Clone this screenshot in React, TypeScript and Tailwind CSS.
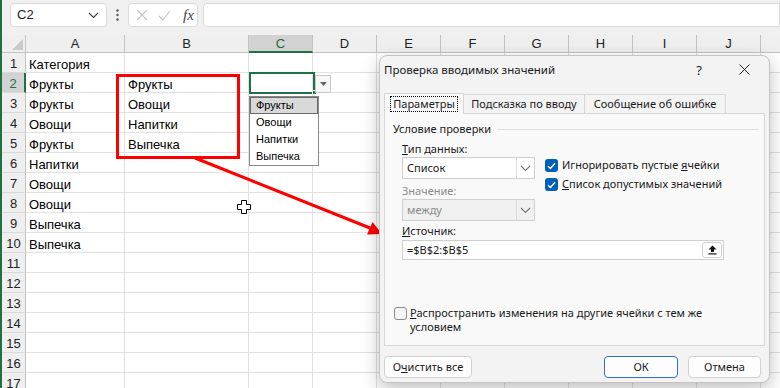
import React from "react";

const cols = [
  { l: "A", w: "w-[99px]" },
  { l: "B", w: "w-[124px]" },
  { l: "C", w: "w-[64px]" },
  { l: "D", w: "w-[64px]" },
  { l: "E", w: "w-[64px]" },
  { l: "F", w: "w-[64px]" },
  { l: "G", w: "w-[64px]" },
  { l: "H", w: "w-[64px]" },
  { l: "I", w: "w-[64px]" },
  { l: "J", w: "w-[64px]" },
  { l: "K", w: "w-[64px]" },
];

const colA = ["Категория", "Фрукты", "Фрукты", "Овощи", "Фрукты", "Напитки", "Овощи", "Овощи", "Выпечка", "Выпечка"];
const colB = ["", "Фрукты", "Овощи", "Напитки", "Выпечка"];
const rows = Array.from({ length: 17 }, (_, i) => i + 1);

function Chevron({ className = "" }: { className?: string }) {
  return (
    <svg width="11" height="7" viewBox="0 0 11 7" className={className}>
      <path d="M1 1l4.5 4.5L10 1" fill="none" stroke="currentColor" strokeWidth="1.1" />
    </svg>
  );
}

function Check() {
  return (
    <span className="flex h-[13px] w-[13px] items-center justify-center rounded-[3px] bg-[#005fb8]">
      <svg width="9" height="8" viewBox="0 0 9 8">
        <path d="M1 4.2l2.4 2.3L8 1.3" fill="none" stroke="white" strokeWidth="1.3" />
      </svg>
    </span>
  );
}

function FormulaBar() {
  return (
    <div className="flex h-[35px] items-start pl-[8px] pt-[3px]">
      <div className="flex h-[24px] w-[100px] items-center justify-between rounded-[4px] border border-[#dadada] bg-white pl-[6px] pr-[7px] text-[13px] text-[#222]">
        <span>C2</span>
        <Chevron className="text-[#444]" />
      </div>
      <div className="flex h-[24px] w-[22px] items-center justify-center text-[#555]">
        <svg width="3" height="12" viewBox="0 0 3 12">
          <circle cx="1.5" cy="1.5" r="1.2" fill="currentColor" />
          <circle cx="1.5" cy="6" r="1.2" fill="currentColor" />
          <circle cx="1.5" cy="10.5" r="1.2" fill="currentColor" />
        </svg>
      </div>
      <div className="flex h-[24px] w-[72px] items-center rounded-[4px] border border-[#dadada] bg-white pl-[7px]">
        <svg width="12" height="12" viewBox="0 0 12 12" className="text-[#c4c4c4]">
          <path d="M1 1l10 10M11 1L1 11" stroke="currentColor" strokeWidth="1.1" />
        </svg>
        <svg width="13" height="11" viewBox="0 0 13 11" className="ml-[10px] text-[#c4c4c4]">
          <path d="M1 6l3.8 4L12 1" fill="none" stroke="currentColor" strokeWidth="1.1" />
        </svg>
        <span className="ml-[12px] font-['Liberation_Serif',serif] text-[15px] italic text-[#444]">fx</span>
      </div>
      <div className="ml-[5px] h-[24px] w-[600px] rounded-l-[4px] border border-[#dadada] bg-white" />
    </div>
  );
}

function Sheet() {
  return (
    <div className="bg-white">
      <div className="flex h-[18px] bg-[#efefef]">
        <div className="relative w-[24px] shrink-0 border-b border-r border-[#c3c3c3]">
          <svg width="11" height="11" viewBox="0 0 11 11" className="absolute left-[10px] top-[4px]">
            <path d="M11 0L11 11L0 11Z" fill="#c9c9c9" />
          </svg>
        </div>
        {cols.map((c) =>
          c.l === "C" ? (
            <div key={c.l} className={`${c.w} flex shrink-0 items-center justify-center border-b-2 border-r border-b-[#1e7145] border-r-[#c3c3c3] bg-[#d2d2d2] pt-[2px] text-[13px] text-[#1e6c41]`}>
              {c.l}
            </div>
          ) : (
            <div key={c.l} className={`${c.w} flex shrink-0 items-center justify-center border-b border-r border-[#c3c3c3] text-[13px] text-[#222]`}>
              {c.l}
            </div>
          )
        )}
      </div>
      {rows.map((r) => (
        <div key={r} className="flex h-[20px]">
          {r === 2 ? (
            <div className="flex w-[24px] shrink-0 items-center justify-center border-b border-r-2 border-b-[#d9d9d9] border-r-[#1e7145] bg-[#d2d2d2] pt-[3px] text-[13px] text-[#1e6c41]">
              {r}
            </div>
          ) : (
            <div className="flex w-[24px] shrink-0 items-center justify-center border-b border-r border-b-[#d9d9d9] border-r-[#c3c3c3] bg-[#efefef] pt-[3px] text-[13px] text-[#222]">
              {r}
            </div>
          )}
          {cols.map((c, ci) => (
            <div key={c.l} className={`${c.w} shrink-0 overflow-hidden whitespace-nowrap border-b border-r border-[#e1e1e1] pl-[3px] pt-[3px] text-[13px] leading-[17px] text-black`}>
              {ci === 0 ? colA[r - 1] ?? "" : ci === 1 ? colB[r - 1] ?? "" : ""}
            </div>
          ))}
        </div>
      ))}
    </div>
  );
}

function Dialog() {
  return (
    <div className="absolute left-[377px] top-[55px] h-[328px] w-[391px] rounded-[8px] border border-[#c4c4c4] bg-[#f3f3f3] font-['Noto_Sans',sans-serif] text-[11px] text-[#1a1a1a] shadow-[0_6px_18px_rgba(0,0,0,0.25)]">
      <div className="flex h-[37px] items-start pl-[4px] pr-[19px] pt-[6px]">
        <span className="text-[11.5px] leading-[16px]">Проверка вводимых значений</span>
        <span className="ml-auto text-[13px] leading-[16px]">?</span>
        <svg width="11" height="11" viewBox="0 0 11 11" className="ml-[37px] mt-[2px]">
          <path d="M0.5 0.5l10 10M10.5 0.5l-10 10" stroke="#222" strokeWidth="1" />
        </svg>
      </div>
      <div className="flex h-[20px] items-end px-[4px]">
        <div className="relative z-10 -mb-px flex h-[21px] w-[80px] items-center justify-center border border-b-0 border-[#d6d6d6] bg-[#f9f9f9]">
          <span className="px-[2px] leading-[14px] outline-1 outline-dotted outline-black">Параметры</span>
        </div>
        <div className="flex h-[19px] w-[121px] items-center justify-center border border-b-0 border-l-0 border-[#d6d6d6] bg-[#f3f3f3]">
          Подсказка по вводу
        </div>
        <div className="flex h-[19px] w-[141px] items-center justify-center border border-b-0 border-l-0 border-[#d6d6d6] bg-[#f3f3f3]">
          Сообщение об ошибке
        </div>
      </div>
      <div className="mx-[4px] h-[233px] border border-[#d6d6d6] bg-[#f9f9f9] pl-[8px] pr-[5px] pt-[7px]">
        <div className="flex h-[16px] items-center">
          <span>Условие проверки</span>
          <div className="ml-[6px] h-px flex-1 bg-[#dcdcdc]" />
        </div>
        <div className="pl-[9px]">
          <div className="mt-[4px] flex h-[16px] items-center">
            <span><span className="underline">Т</span>ип данных:</span>
          </div>
          <div className="flex">
            <div className="w-[133px]">
              <div className="flex h-[22px] items-center border border-[#cfcfcf] bg-white">
                <span className="flex-1 pl-[4px]">Список</span>
                <div className="flex h-full w-[18px] items-center justify-center border-l border-[#dcdcdc]">
                  <Chevron className="text-[#777]" />
                </div>
              </div>
              <div className="mt-[4px] flex h-[16px] items-center text-[#8a8a8a]">Значение:</div>
              <div className="flex h-[22px] items-center border border-[#cfcfcf] bg-[#f0f0f0] text-[#8a8a8a]">
                <span className="flex-1 pl-[4px]">между</span>
                <div className="flex h-full w-[18px] items-center justify-center border-l border-[#dcdcdc]">
                  <Chevron className="text-[#777]" />
                </div>
              </div>
            </div>
            <div className="ml-[10px] pt-[2px]">
              <div className="flex h-[13px] items-center">
                <Check />
                <span className="ml-[4px]">Игнорировать пустые <span className="underline">я</span>чейки</span>
              </div>
              <div className="mt-[6px] flex h-[13px] items-center">
                <Check />
                <span className="ml-[4px]"><span className="underline">С</span>писок допустимых значений</span>
              </div>
            </div>
          </div>
          <div className="mt-[2px] flex h-[16px] items-center">
            <span><span className="underline">И</span>сточник:</span>
          </div>
          <div className="mt-[1px] flex h-[20px] w-[322px] items-center border border-[#cfcfcf] bg-white pl-[4px]">
            <span className="flex-1">=$B$2:$B$5</span>
            <div className="mr-px flex h-[16px] w-[20px] items-center justify-center rounded-[3px] border border-[#cfcfcf] bg-white">
              <svg width="9" height="10" viewBox="0 0 9 10">
                <path d="M4.5 0.5L8.5 4.5H6V7H3V4.5H0.5Z" fill="#111" />
                <rect x="0.5" y="8.3" width="8" height="1.2" fill="#111" />
              </svg>
            </div>
          </div>
        </div>
        <div className="ml-px mt-[46px] flex items-start">
          <span className="mt-px block h-[13px] w-[13px] shrink-0 rounded-[3px] border border-[#8b8b8b] bg-[#f5f5f5]" />
          <span className="ml-[3px] leading-[14px]">
            <span className="underline">Р</span>аспространить изменения на другие ячейки с тем же
            <br />
            условием
          </span>
        </div>
      </div>
      <div className="mt-[10px] flex pl-[4px] pr-[8px]">
        <button className="flex h-[22px] w-[88px] items-center justify-center rounded-[4px] border border-[#d1d1d1] bg-[#fdfdfd]">
          <span>О<span className="underline">ч</span>истить все</span>
        </button>
        <button className="ml-auto flex h-[22px] w-[74px] items-center justify-center rounded-[4px] border border-[#2f72c4] bg-[#fdfdfd]">
          ОК
        </button>
        <button className="ml-[10px] flex h-[22px] w-[73px] items-center justify-center rounded-[4px] border border-[#d1d1d1] bg-[#fdfdfd]">
          Отмена
        </button>
      </div>
    </div>
  );
}

export default function App() {
  return (
    <div className="relative h-[388px] w-[780px] overflow-hidden border-l-2 border-[#1e7145] bg-[#f0f0f0] font-['Liberation_Sans',sans-serif]">
      <FormulaBar />
      <Sheet />

      {/* active cell C2 with its list arrow */}
      <div className="absolute left-[247px] top-[72px] h-[22px] w-[66px] border-2 border-[#1e7145]" />
      <div className="absolute left-[310px] top-[90px] h-[5px] w-[5px] border border-white bg-[#1e7145]" />
      <div className="absolute left-[313px] top-[75px] flex h-[18px] w-[16px] items-center justify-center border border-[#c9c9c9] bg-[#f7f7f7]">
        <svg width="7" height="4" viewBox="0 0 7 4">
          <path d="M0 0H7L3.5 4Z" fill="#666" />
        </svg>
      </div>

      {/* open list */}
      <div className="absolute left-[247px] top-[96px] w-[70px] border border-[#8a8a8a] bg-white text-[11px] leading-[17px] text-black">
        <div className="border border-[#6a6a6a] bg-[#d9d9d9] pl-[5px] leading-[15px]">Фрукты</div>
        <div className="pl-[6px]">Овощи</div>
        <div className="pl-[6px]">Напитки</div>
        <div className="pl-[6px]">Выпечка</div>
      </div>

      {/* red annotation */}
      <div className="absolute left-[114px] top-[74px] h-[85px] w-[124px] border-[3px] border-[#ff0000]" />
      <svg className="absolute left-0 top-0" width="780" height="388">
        <line x1="193" y1="158" x2="368" y2="228" stroke="#ff0000" strokeWidth="3" />
        <polygon points="380,234 365,234.5 370.5,222" fill="#ff0000" />
      </svg>

      {/* mouse cursor */}
      <svg className="absolute left-[234px] top-[199px]" width="16" height="16" viewBox="0 0 16 16">
        <path d="M5.5 1.5h5v4h4v5h-4v4h-5v-4h-4v-5h4z" fill="white" stroke="black" strokeWidth="1" />
      </svg>

      <Dialog />
    </div>
  );
}
